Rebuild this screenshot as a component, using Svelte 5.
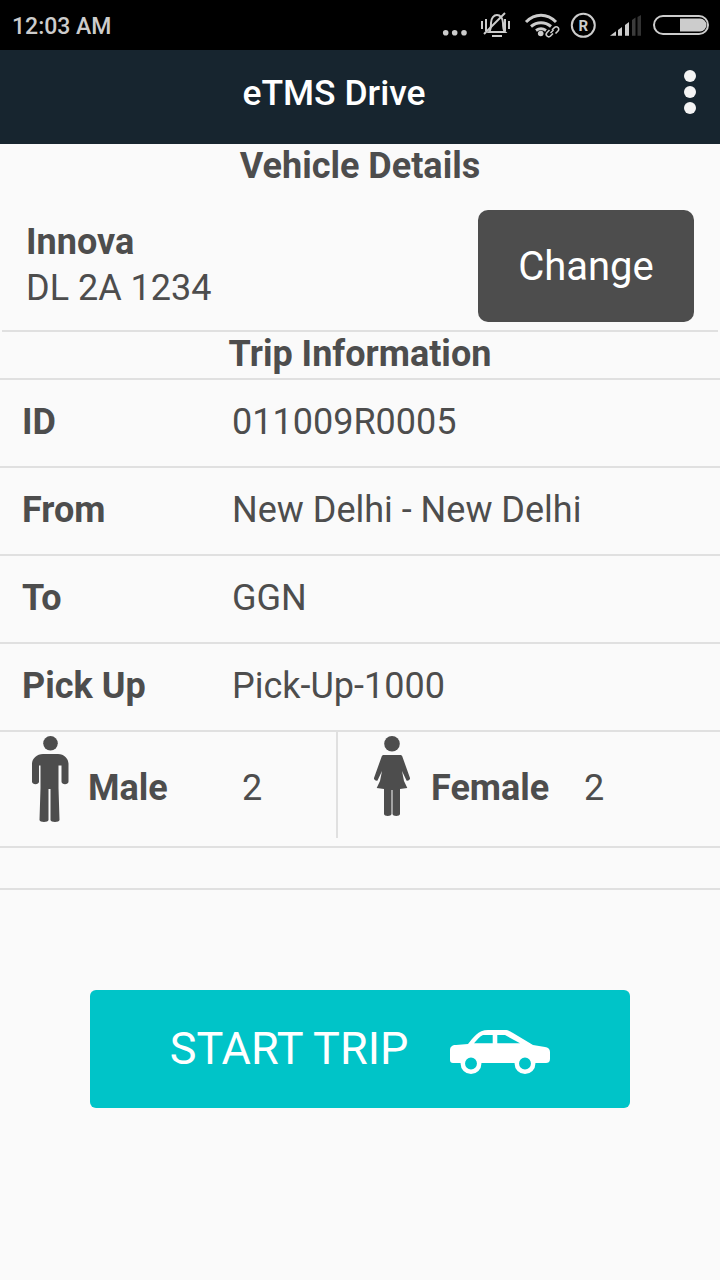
<script>
	const rows = [
		{ label: 'ID', value: '011009R0005' },
		{ label: 'From', value: 'New Delhi - New Delhi' },
		{ label: 'To', value: 'GGN' },
		{ label: 'Pick Up', value: 'Pick-Up-1000' }
	];
</script>

<div class="screen">
	<div class="status">
		<span class="time">12:03 AM</span>
		<svg class="status-icons" width="300" height="50" viewBox="0 0 300 50">
			<g fill="#ccc">
				<circle cx="25.700" cy="32.700" r="2.800" />
				<circle cx="34.700" cy="32.700" r="2.800" />
				<circle cx="44" cy="32.700" r="2.800" />
			</g>
			<g fill="none" stroke="#ccc" stroke-width="2">
				<path d="M62 21v8M66 19v12M85 19v12M89 21v8" />
				<path d="M69 32c2-2 2-5 2-9 0-5 3-8 6-8s6 3 6 8c0 4 0 7 2 9z" />
				<path d="M72 36h10" />
				<path d="M64 34L85 13" />
			</g>
			<g fill="none" stroke="#ccc" stroke-width="3">
				<path d="M106 22c9-9 21-9 30 0" />
				<path d="M111 26.500c6-5 14-5 20 0" />
				<path d="M116 30.500c3-2 7-2 10 0" />
			</g>
			<circle cx="120.700" cy="33.500" r="2.800" fill="#ccc" />
			<g fill="none" stroke="#ccc" stroke-width="1.600">
				<path d="M132 30l2.500-2.500a2.400 2.400 0 0 1 3.500 3.500l-2.500 2.500" />
				<path d="M133 33.500l-2.500 2.500a2.400 2.400 0 0 1-3.500-3.500l2.500-2.500" />
				<path d="M130.500 33l3-3" />
			</g>
			<circle cx="163.300" cy="25.300" r="11.500" fill="none" stroke="#ccc" stroke-width="2" />
			<text x="163.300" y="30.500" text-anchor="middle" class="r">R</text>
			<path d="M190 35.700l6-4.500v4.500z" fill="#ccc" />
			<path d="M198 30l4-3v8.700h-4z" fill="#ccc" />
			<path d="M205 25l4-3v13.700h-4z" fill="#ccc" />
			<path d="M212 20l3.500-2.500v18.200H212z" fill="#3c3c3c" />
			<path d="M217.500 17l3.500-2v20.700h-3.500z" fill="#333" />
			<rect x="234" y="16" width="54" height="18" rx="9" fill="none" stroke="#ccc" stroke-width="2" />
			<path d="M260 18.500h20a6.500 6.500 0 0 1 0 13h-20z" fill="#ccc" />
		</svg>
	</div>

	<header class="toolbar">
		<span class="title">eTMS Drive</span>
		<div class="menu"><i></i><i></i><i></i></div>
	</header>

	<h2 class="heading first">Vehicle Details</h2>
	<div class="vehicle">
		<div class="vehicle-text">
			<strong>Innova</strong>
			<span>DL 2A 1234</span>
		</div>
		<button class="change">Change</button>
	</div>

	<h2 class="heading trip">Trip Information</h2>

	{#each rows as row}
		<div class="row">
			<span class="label">{row.label}</span>
			<span class="value">{row.value}</span>
		</div>
	{/each}

	<div class="gender">
		<div class="cell male">
			<svg class="person" width="37" height="87" viewBox="0 0 37 87" fill="#4d4d4d">
				<circle cx="18.500" cy="7.300" r="7.300" />
				<path d="M11 18h15c6 0 10.500 4.500 10.500 10v17.500c0 3.500-7 3.500-7 0V29.500h-3V52l1 32c0 2.500-9 2.500-9 0V53h-2v31c0 2.500-9 2.500-9 0l1-32V29.500H7v16c0 3.500-7 3.500-7 0V28C0 22.500 5 18 11 18z" />
			</svg>
			<span class="label gender-label">Male</span>
			<span class="count">2</span>
		</div>
		<div class="cell female">
			<svg class="person" width="36" height="80" viewBox="0 0 36 80" fill="#4d4d4d">
				<circle cx="18" cy="7.800" r="7.800" />
				<path d="M10 19h16c1.500 0 2 .5 2.500 2L36 42c.5 1.500-2.500 3.500-3.500 2.500L28 35l2 10 3.300 7-7.300 1v25c0 2.500-7.500 2.500-7.500 0V54h-1v24c0 2.500-7.500 2.500-7.500 0V53l-7.300-1L6 45l2-10-4.500 9.500C2.500 45.500-.5 43.500 0 42L7.500 21c.5-1.500 1-2 2.500-2z" />
			</svg>
			<span class="label gender-label">Female</span>
			<span class="count">2</span>
		</div>
	</div>
	<div class="blank"></div>

	<div class="action">
		<button class="start">
			<span class="start-text">START TRIP</span>
			<svg class="car" width="100" height="44" viewBox="0 0 100 44" fill="#fff">
				<path fill-rule="evenodd" d="M6 15l12-1C23 8 28 0 38 0h17c3 0 5 1 8 3l20 12 12 2c3 .5 5 2 5 5v7c0 3-2 4-4 4H3c-2 0-3-1-3-3V20c0-3 2-5 6-5zM24 13.300h18.700V5H33c-3 1-6 5-9 8.300zM47.300 13.300H70L55 5h-7.700z" />
				<circle class="wheel" cx="21" cy="33.500" r="8.200" />
				<circle class="wheel" cx="75" cy="33.500" r="8.200" />
			</svg>
		</button>
	</div>
</div>

<style>
	:global(body) {
		margin: 0;
		background: #fafafa;
	}
	.screen {
		width: 720px;
		height: 1280px;
		overflow: hidden;
		background: #fafafa;
		font-family: Roboto, sans-serif;
		color: #4d4d4d;
		display: flex;
		flex-direction: column;
	}
	.status {
		height: 50px;
		background: #000;
		display: flex;
		align-items: center;
		justify-content: space-between;
		padding-left: 12px;
	}
	.time {
		color: #ccc;
		font-size: 23px;
		font-weight: 500;
		margin-top: 3px;
	}
	.r {
		fill: #ccc;
		font-size: 15px;
		font-weight: 700;
	}
	.toolbar {
		height: 94px;
		background: #17252f;
		display: flex;
		align-items: center;
		position: relative;
		justify-content: center;
		padding: 0 52px 8px 0;
		box-sizing: border-box;
	}
	.title {
		color: #fff;
		font-size: 35.500px;
		font-weight: 500;
	}
	.menu {
		position: absolute;
		right: 24px;
		top: 20px;
		display: flex;
		flex-direction: column;
		gap: 4px;
	}
	.menu i {
		width: 12px;
		height: 12px;
		border-radius: 50%;
		background: #f4f4f4;
	}
	.heading {
		margin: 0;
		text-align: center;
		font-size: 36px;
		font-weight: 700;
		line-height: 44px;
	}
	.vehicle {
		height: 144px;
		margin: 0 2px;
		box-sizing: border-box;
		border-bottom: 2px solid #e0e0e0;
		display: flex;
		align-items: flex-start;
		justify-content: space-between;
		padding: 22px 24px 0 24px;
	}
	.vehicle-text {
		display: flex;
		flex-direction: column;
		font-size: 36px;
		line-height: 46px;
		padding-top: 9px;
	}
	.vehicle-text strong {
		font-weight: 700;
	}
	.change {
		width: 216px;
		height: 112px;
		border: none;
		border-radius: 10px;
		background: #4d4d4d;
		color: #fff;
		font-family: inherit;
		font-size: 40px;
	}
	.trip {
		height: 48px;
		line-height: 44px;
		box-sizing: border-box;
		border-bottom: 2px solid #e0e0e0;
	}
	.row {
		height: 88px;
		box-sizing: border-box;
		border-bottom: 2px solid #e0e0e0;
		display: grid;
		grid-template-columns: 210px 1fr;
		align-items: center;
		padding: 0 0 2px 22px;
		font-size: 36px;
	}
	.label {
		font-weight: 700;
	}
	.gender {
		height: 116px;
		box-sizing: border-box;
		border-bottom: 2px solid #e0e0e0;
		display: flex;
	}
	.cell {
		display: flex;
		align-items: flex-start;
		font-size: 36px;
		line-height: 42px;
		height: 106px;
	}
	.male {
		width: 338px;
		box-sizing: border-box;
		border-right: 2px solid #e0e0e0;
		padding-left: 32px;
	}
	.female {
		padding-left: 36px;
	}
	.person {
		flex: none;
		margin-top: 4px;
	}
	.gender-label {
		margin: 35px 0 0 21px;
		width: 154px;
	}
	.male .gender-label {
		margin-left: 19px;
	}
	.female .gender-label {
		width: 153px;
	}
	.count {
		font-weight: 400;
		margin-top: 35px;
	}
	.blank {
		height: 42px;
		box-sizing: border-box;
		border-bottom: 2px solid #e0e0e0;
		flex: none;
	}
	.action {
		display: flex;
		justify-content: center;
		padding-top: 100px;
	}
	.start {
		width: 540px;
		height: 118px;
		border: none;
		border-radius: 6px;
		background: #00c4c8;
		color: #fff;
		font-family: inherit;
		font-size: 45px;
		display: flex;
		align-items: center;
		justify-content: center;
		gap: 42px;
		padding: 0;
	}
	.start-text {
		margin-bottom: 2px;
	}
	.car {
		margin-top: 6px;
	}
	.wheel {
		fill: #00c4c8;
		stroke: #fff;
		stroke-width: 4.500px;
	}
</style>
